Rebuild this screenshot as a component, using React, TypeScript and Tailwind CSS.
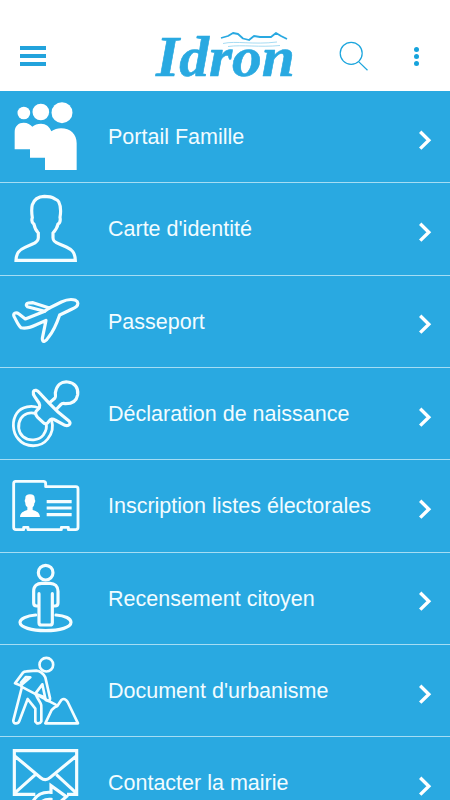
import React from "react";

type IconProps = { children: React.ReactNode; top?: number };

// Outline icons share one 300x276 drawing grid, shown at a third of its size
function RowIcon({ children, top = 0 }: IconProps) {
  return (
    <svg
      width="100"
      height="92"
      viewBox={`0 ${top} 300 276`}
      className="shrink-0 self-start"
      fill="none"
      stroke="#f4fdff"
      strokeWidth="9.5"
      strokeLinecap="round"
      strokeLinejoin="round"
      aria-hidden="true"
    >
      {children}
    </svg>
  );
}

const FamilyIcon = () => (
  <RowIcon top={3}>
    <g fill="#fff" stroke="none">
      <circle cx="71.500" cy="69" r="19" />
      <circle cx="122.500" cy="66" r="25" />
      <circle cx="186" cy="68" r="31.500" />
      <path d="M44 178V126C44 108 56 98 71 98C83 98 91 103 97 110C104 104 112 101 123 101C138 101 149 110 154 124C163 118 172 115 183 115C211 115 230 132 230 160V240H135V203H90V178Z" />
    </g>
  </RowIcon>
);

const IdentityIcon = () => (
  <RowIcon>
    <path
      strokeLinejoin="miter"
      d="M48 232H226C225 208 216 200 199 192L178 183C164 178 159 174 159 164V150C167 141 172 134 174 123C181 119 182 113 180 103C183 86 182 68 176 56C172 49 166 50 162 46C153 40 144 40 133 40C113 41 102 50 97 65C94 77 95 91 97 104C94 112 96 119 102 124C104 136 109 144 115 150V164C115 174 108 179 96 184L75 193C57 201 49 210 48 232Z"
    />
  </RowIcon>
);

const PlaneIcon = () => (
  <RowIcon top={2}>
    <path d="M82 94C76 90 79 84 85 83L99 82L148 98L184 80C199 73 216 71 227 75C236 79 235 88 229 94C224 99 213 102 204 107L179 119C170 145 160 168 146 185C139 197 126 205 127 189L138 135L107 149C92 156 75 160 63 157C54 150 49 135 43 125C36 112 49 110 57 116L76 131L134 108Z" />
    <path d="M134 108L148 98" />
  </RowIcon>
);

const PacifierIcon = () => (
  <RowIcon top={1}>
    <g strokeWidth="8.5">
      <path d="M117 121C95 112 66 116 51 136C35 158 37 194 55 214C77 241 122 241 143 214C156 198 161 179 155 159" />
      <path d="M107 138C91 132 71 138 63 152C51 171 55 195 69 207C87 222 117 219 130 202C138 190 142 179 138 168" />
    </g>
    <path d="M108 68C99 66 97 77 104 87L117 106C123 118 116 123 109 130C103 138 108 143 113 149L130 165C136 171 142 168 146 162C152 153 158 152 165 157L195 173C206 177 216 167 206 159L175 134L148 107L119 76C115 71 111 69 108 68Z" />
    <path d="M149 105L165 91C168 88 166 82 166 75C170 52 184 41 203 43C224 45 236 61 233 81C230 98 217 108 197 108C190 107 186 106 183 110L170 124" />
  </RowIcon>
);

const ElectorIcon = () => (
  <RowIcon>
    <path
      strokeWidth="8.5"
      d="M47 64H130Q137 64 137 71V80H228Q234 80 234 87V202Q234 209 227 209H205V202H184V209H84V202H71V209H48Q41 209 41 202V71Q41 64 47 64Z"
    />
    <path
      fill="#fff"
      stroke="none"
      d="M60 171C61 158 70 154 82 150V141C77 138 76 133 76 128C73 124 74 119 76 117C75 107 80 103 90 103C101 103 105 108 104 118C107 122 106 127 103 130C103 136 101 139 98 142V150C111 154 119 158 120 171Z"
    />
    <path strokeLinecap="butt" d="M140 125H215M140 144H215M140 164H215" />
  </RowIcon>
);

const CitizenIcon = () => (
  <RowIcon top={2}>
    <circle cx="137" cy="61" r="22" />
    <path d="M117 124V211Q117 218 124 218H150Q157 218 157 211V124M117 161H110Q101 161 101 152V117C101 100 112 93 125 93H150C164 93 174 102 174 117V152Q174 161 165 161H158" />
    <path d="M107 188C80 190 60 200 60 210C60 225 95 235 137 235C180 235 213 225 213 210C213 199 195 190 168 188" />
  </RowIcon>
);

const DiggerIcon = () => (
  <RowIcon top={1}>
    <g strokeWidth="8">
      <circle cx="139" cy="60" r="20.500" />
      <path d="M64 123L45 116L69 84Q72 80 79 80L109 78Q126 80 136 98L150 160Q151 167 145 169L137 166L127 119L106 147L111 157L122 176Q125 182 124 190V230Q120 238 111 236L106 231V192L83 163L58 229C54 239 39 239 40 227L65 130" />
      <path d="M64 121L91 98L78 97L63 114M64 126L167 180M106 147L134 158" />
      <path d="M136 236H234L203 172Q195 158 184 166L172 184L164 188L155 196Z" />
    </g>
  </RowIcon>
);

const ContactIcon = () => (
  <RowIcon top={277}>
    <path
      strokeLinecap="butt"
      strokeLinejoin="miter"
      d="M106 449H43V318H230V449H201M43 333L122 399Q136 411 150 399L230 333M43 446L106 390M230 446L169 390"
    />
    <path
      strokeLinejoin="miter"
      d="M99 470C108 453 125 441 153 443V423L199 456L178 474M122 474C130 466 141 463 153 464V474"
    />
  </RowIcon>
);

const services = [
  { label: "Portail Famille", icon: <FamilyIcon /> },
  { label: "Carte d'identité", icon: <IdentityIcon /> },
  { label: "Passeport", icon: <PlaneIcon /> },
  { label: "Déclaration de naissance", icon: <PacifierIcon /> },
  { label: "Inscription listes électorales", icon: <ElectorIcon /> },
  { label: "Recensement citoyen", icon: <CitizenIcon /> },
  { label: "Document d'urbanisme", icon: <DiggerIcon /> },
  { label: "Contacter la mairie", icon: <ContactIcon /> },
];

function Logo() {
  return (
    <svg width="145" height="74" viewBox="0 -10 145 74" aria-label="Idron" fill="#29a9e1">
      <text
        x="2"
        y="50"
        fontFamily="'Liberation Serif', serif"
        fontSize="57"
        fontWeight="700"
        fontStyle="italic"
        textLength="139"
        lengthAdjust="spacingAndGlyphs"
        stroke="#29a9e1"
        strokeWidth="0.6"
        strokeLinejoin="round"
      >
        Idron
      </text>
      <path
        d="M67 12L74 10L79 7L84 8L89 12.500L95 14L100 10L106 11L117 11L122 7L127 10L133 13"
        fill="none"
        stroke="#29a9e1"
        strokeWidth="1.8"
        strokeLinejoin="round"
      />
      <path
        d="M69 17.500C82 14.500 99 19 123 16M74 20.500C89 18.500 105 21.500 126 19.500"
        fill="none"
        stroke="#8fd2ef"
        strokeWidth="0.8"
      />
    </svg>
  );
}

function Header() {
  return (
    <header className="flex h-[91px] shrink-0 items-start bg-white pt-4 text-[#1ba5dd]">
      <button aria-label="Menu" className="mt-[30px] ml-5 flex w-[26px] flex-col gap-1">
        <span className="h-1 bg-[#22a3dc]" />
        <span className="h-1 bg-[#22a3dc]" />
        <span className="h-1 bg-[#22a3dc]" />
      </button>
      <div className="ml-[108px] w-[145px]">
        <Logo />
      </div>
      <button aria-label="Rechercher" className="mt-[25px] ml-10">
        <svg width="31" height="31" viewBox="0 0 31 31" fill="none" stroke="currentColor" strokeWidth="1.200">
          <circle cx="12.200" cy="12.300" r="11" />
          <path d="M19.600 20.600L28.500 29.300" />
        </svg>
      </button>
      <button aria-label="Options" className="mt-[30.500px] ml-[44px] flex flex-col gap-[2.300px]">
        <span className="size-[5px] rounded-full bg-[#16a3dc]" />
        <span className="size-[5px] rounded-full bg-[#16a3dc]" />
        <span className="size-[5px] rounded-full bg-[#16a3dc]" />
      </button>
    </header>
  );
}

export default function App() {
  return (
    <div className="flex h-screen w-full flex-col overflow-hidden bg-[#29a9e1] font-['Liberation_Sans',sans-serif]">
      <Header />
      <main>
        {services.map(({ label, icon }) => (
          <a
            key={label}
            href="#"
            className="flex h-[92.330px] items-center border-b border-[#a5ddf4] text-white"
          >
            {icon}
            <span className="mt-0.5 ml-2 w-[280px] shrink-0 text-[21.500px] leading-none whitespace-nowrap text-[#f2fcff]">
              {label}
            </span>
            <svg
              width="14"
              height="22"
              viewBox="0 0 14 22"
              className="mt-1.5 ml-[30px] shrink-0"
              fill="none"
              stroke="#fff"
              strokeWidth="3.400"
            >
              <path d="M2.200 2.800L10.800 11.200L2.200 19.600" />
            </svg>
          </a>
        ))}
      </main>
    </div>
  );
}
